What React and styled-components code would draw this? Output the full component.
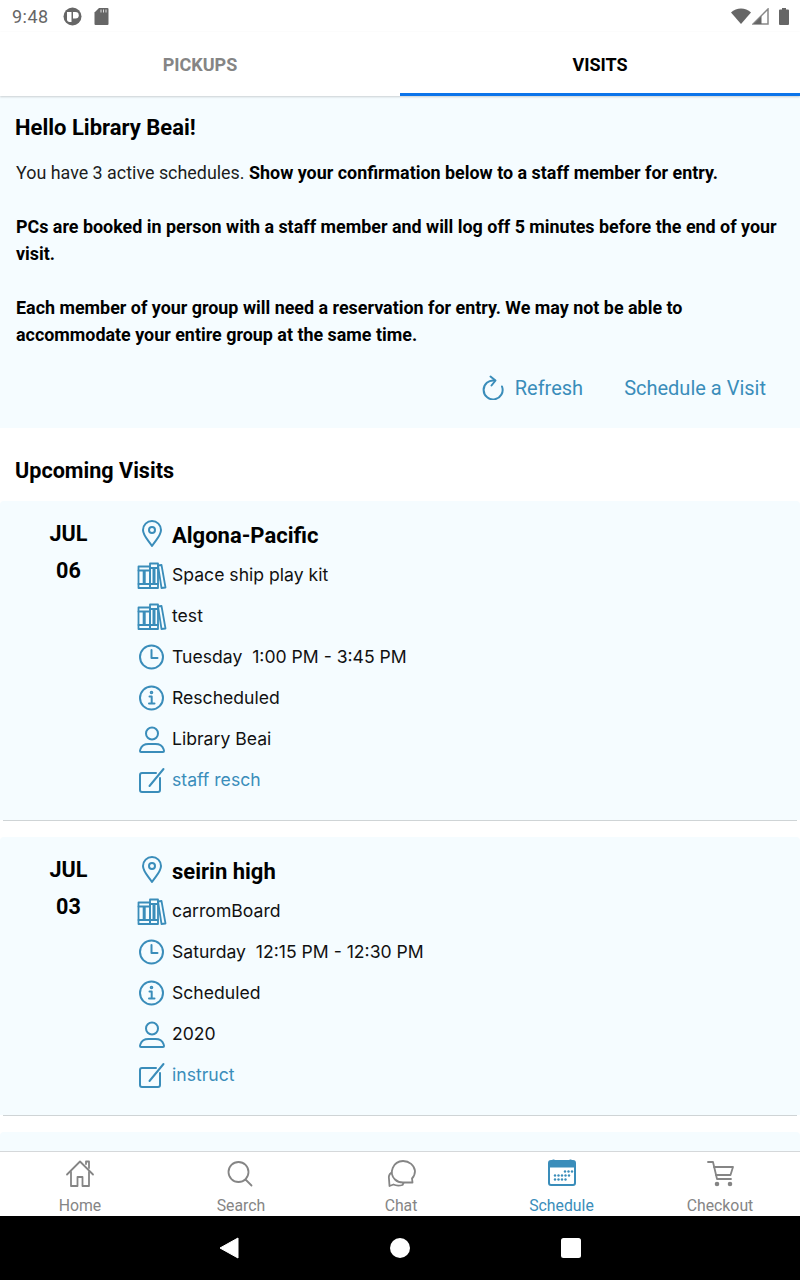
import React from "react";
import styled, { createGlobalStyle } from "styled-components";

const Global = createGlobalStyle`
  html, body { margin: 0; padding: 0; background: white; }
  body { font-family: Roboto, "Liberation Sans", sans-serif; }
`;

const BLUE = "#3a8dba";
const GREY = "#858585";
const PANEL = "#f5fcff";

const Screen = styled.div`
  width: 800px;
  height: 1280px;
  display: flex;
  flex-direction: column;
  overflow: hidden;
`;
const StatusBar = styled.div`
  height: 32px;
  flex: none;
  display: flex;
  align-items: center;
  padding: 0 11px 0 12px;
  color: #666;
  font-size: 18px;
`;
const StatusTime = styled.span`
  margin-right: 14px;
  letter-spacing: 0.5px;
`;
const StatusRight = styled.div`
  margin-left: auto;
  display: flex;
  align-items: center;
  gap: 1px;
`;
const Tabs = styled.div`
  height: 64px;
  flex: none;
  display: flex;
  box-shadow: 0 1px 2px rgba(0, 0, 0, 0.18);
  position: relative;
  z-index: 1;
`;
const Tab = styled.div`
  flex: 1;
  display: flex;
  align-items: center;
  justify-content: center;
  padding-top: 3px;
  font-size: 18px;
  font-weight: 700;
  color: ${p => (p.$active ? "#000" : GREY)};
  border-bottom: 3px solid ${p => (p.$active ? "#0b74ea" : "transparent")};
`;
const Scroll = styled.div`
  flex: 1;
  min-height: 0;
  overflow: hidden;
`;
const Banner = styled.div`
  background: ${PANEL};
  height: 332px;
  box-sizing: border-box;
  padding: 19px 16px 0 16px;
  color: #000;
`;
const Hello = styled.div`
  font-size: 22px;
  font-weight: 700;
  line-height: 26px;
  margin-left: -1px;
  margin-bottom: 18px;
`;
const Para = styled.p`
  margin: 0 0 27px;
  font-size: 17.9px;
  color: #1c1c1c;
  line-height: 27px;
  b { font-weight: 700; color: #000; }
`;
const Actions = styled.div`
  display: flex;
  justify-content: flex-end;
  align-items: center;
  gap: 41px;
  padding-right: 18px;
  color: ${BLUE};
  font-size: 20px;
`;
const Action = styled.div`
  display: flex;
  align-items: center;
  gap: 9px;
`;
const SectionTitle = styled.div`
  height: 73px;
  box-sizing: border-box;
  padding: 30px 15px 0;
  font-size: 21.600px;
  line-height: 26px;
  font-weight: 700;
  color: #000;
`;
const Visit = styled.div`
  background: ${PANEL};
  display: flex;
  padding: 14px 0 20px;
  border-radius: 4px 4px 0 0;
`;
const DateCol = styled.div`
  width: 137px;
  flex: none;
  text-align: center;
  font-size: 21.600px;
  font-weight: 700;
  line-height: 37px;
  color: #000;
`;
const Rows = styled.div`
  display: flex;
  flex-direction: column;
`;
const Row = styled.div`
  height: 41px;
  display: flex;
  align-items: center;
  font-family: Inter, Roboto, sans-serif;
  font-size: 17.600px;
  color: ${p => (p.$link ? BLUE : "#111")};
`;
const TitleRow = styled(Row)`
  height: 40px;
  font-family: Roboto, sans-serif;
  font-size: 22px;
  font-weight: 700;
  color: #000;
  margin-bottom: -1px;
`;
const IconSlot = styled.div`
  width: 30px;
  height: 30px;
  margin-right: 5px;
  display: flex;
  align-items: center;
  justify-content: center;
  flex: none;
`;
const Divider = styled.div`
  height: 1px;
  margin: 0 3px 16px;
  background: #cfd4d6;
`;
const BottomNav = styled.div`
  height: 64px;
  flex: none;
  display: flex;
  background: white;
  border-top: 1px solid #d5d8da;
`;
const NavItem = styled.div`
  width: ${p => p.$w}px;
  flex: none;
  display: flex;
  flex-direction: column;
  align-items: center;
  color: ${p => (p.$active ? BLUE : GREY)};
  font-size: 15.800px;
  line-height: 20px;
  padding-top: 7px;
  box-sizing: border-box;
`;
const NavIcon = styled.div`
  height: 30px;
  margin-bottom: 7px;
`;
const SystemBar = styled.div`
  height: 64px;
  flex: none;
  background: #000;
  display: flex;
  align-items: center;
  justify-content: center;
`;
const SysSlot = styled.div`
  width: 171px;
  display: flex;
  justify-content: center;
`;

const Svg = ({ w = 30, h = 30, color = BLUE, sw = 2, children }) => (
  <svg
    width={w}
    height={h}
    viewBox={`0 0 ${w} ${h}`}
    fill="none"
    stroke={color}
    strokeWidth={sw}
    strokeLinecap="round"
    strokeLinejoin="round"
  >
    {children}
  </svg>
);

const PinIcon = () => (
  <Svg>
    <path d="M15 26C11 20 6 15.500 6 10a9 9 0 0 1 18 0C24 15.500 19 20 15 26Z" />
    <circle cx="15" cy="10" r="3" />
  </Svg>
);
const BooksIcon = () => (
  <Svg sw={1.8}>
    <path d="M1.500 6.500H13V28H1.500Z" />
    <path d="M1.500 10.500H13M1.500 24H13" />
    <path d="M13 3.500h8V28h-8Z" />
    <path d="M13 8H21M13 24H21" />
    <path d="M7.200 11V23.500M17 8.500V23.500" strokeWidth="3" strokeLinecap="butt" />
    <path d="M21 5.500 24.500 5 28.500 27.500 24.500 28Z" />
  </Svg>
);
const ClockIcon = () => (
  <Svg>
    <circle cx="14.500" cy="15" r="11.500" />
    <path d="M14.500 8v8h6" />
  </Svg>
);
const InfoIcon = () => (
  <Svg>
    <circle cx="14.500" cy="15" r="11.500" />
    <path d="M12.500 13.500h2.200V20.500M12 20.500h5.500" />
    <circle cx="14.500" cy="9.500" r="0.800" />
  </Svg>
);
const PersonIcon = () => (
  <Svg>
    <circle cx="15" cy="9.500" r="6" />
    <path d="M4 28c-1.500 0-1-1.500-.5-3 1-3 4-5 8-5h7c4 0 7 2 8 5 .5 1.500 1 3-.5 3Z" />
  </Svg>
);
const NoteIcon = () => (
  <Svg>
    <path d="M19 8H5a2 2 0 0 0-2 2v15a2 2 0 0 0 2 2h16a2 2 0 0 0 2-2V13" />
    <path d="M12.500 21 26.500 4" />
  </Svg>
);
const RefreshIcon = () => (
  <Svg w={24} h={25}>
    <path d="M12.500 5.500A9.500 9.500 0 1 0 20 11.500" />
    <path d="M8.500 1.500 13.500 5.500 9.500 10.500" />
  </Svg>
);

const HomeIcon = () => (
  <Svg color={GREY} sw={1.800}>
    <path d="M2 15.500 15 2.500 28 15.500" />
    <path d="M6 13v14h6.500v-9h5v9H24V13" />
    <path d="M21 5V2.500h3V9" />
  </Svg>
);
const SearchIcon = () => (
  <Svg color={GREY} sw={1.800}>
    <circle cx="12.500" cy="13" r="10" />
    <path d="M19.500 20.500 25.500 26.500" />
  </Svg>
);
const ChatIcon = () => (
  <Svg color={GREY} sw={1.800}>
    <path d="M17 2A11.500 11 0 0 0 9 20.500c2 2 5 3 8 3h9.500L26 19.500c2-2 3-5 3-7.500A12 11 0 0 0 17 2Z" />
    <path d="M5 14c-2 1.500-2.500 3.500-2 6l.5 7 4-1.500c3 1.500 5 1.500 9 .5l1-2" />
  </Svg>
);
const CalendarIcon = () => (
  <svg width="28" height="27" viewBox="0 0 28 27">
    <rect x="1" y="2" width="26" height="24" rx="2" fill="none" stroke={BLUE} strokeWidth="2" />
    <rect x="1" y="2" width="26" height="6.500" fill={BLUE} />
    <path d="M5.500 0.500v2M22.500 0.500v2" stroke={BLUE} strokeWidth="2" />
    {[
      [17, 12.500], [20.500, 12.500], [24, 12.500],
      [7, 16.500], [10.500, 16.500], [14, 16.500], [17.500, 16.500], [21, 16.500],
      [7, 20.500], [10.500, 20.500], [14, 20.500], [17.500, 20.500]
    ].map(([x, y]) => (
      <circle key={x + "-" + y} cx={x} cy={y} r="1.200" fill={BLUE} />
    ))}
  </svg>
);
const CartIcon = () => (
  <Svg color={GREY} sw={1.800}>
    <path d="M3 3h5l4 17h14" />
    <path d="M9 8H28l-2.500 8H11" />
    <circle cx="12" cy="25" r="1.400" fill={GREY} />
    <circle cx="25" cy="25" r="1.400" fill={GREY} />
  </Svg>
);

const VisitCard = ({ month, day, place, items, time, status, person, note }) => (
  <>
    <Visit>
      <DateCol>
        <div>{month}</div>
        <div>{day}</div>
      </DateCol>
      <Rows>
        <TitleRow>
          <IconSlot><PinIcon /></IconSlot>
          {place}
        </TitleRow>
        {items.map(item => (
          <Row key={item}>
            <IconSlot><BooksIcon /></IconSlot>
            {item}
          </Row>
        ))}
        <Row>
          <IconSlot><ClockIcon /></IconSlot>
          {time}
        </Row>
        <Row>
          <IconSlot><InfoIcon /></IconSlot>
          {status}
        </Row>
        <Row>
          <IconSlot><PersonIcon /></IconSlot>
          {person}
        </Row>
        <Row $link>
          <IconSlot><NoteIcon /></IconSlot>
          {note}
        </Row>
      </Rows>
    </Visit>
    <Divider />
  </>
);

export default function App() {
  return (
    <Screen>
      <Global />
      <StatusBar>
        <StatusTime>9:48</StatusTime>
        <svg width="19" height="19" viewBox="0 0 19 19" style={{ marginRight: 12 }}>
          <circle cx="9.500" cy="9.500" r="9" fill="#666" />
          <path d="M4 5h4.500v10H6.500C5 15 4 14 4 12.500Z" fill="white" />
          <path d="M10 5h2.500a3 3 0 0 1 0 6.500H10Z" fill="white" />
        </svg>
        <svg width="15" height="17" viewBox="0 0 15 17">
          <path d="M5 0h8.500a1 1 0 0 1 1 1v15a1 1 0 0 1-1 1H1.500a1 1 0 0 1-1-1V4.500Z" fill="#666" />
          <path d="M7 1.500v3M9.500 1.500v3M12 1.500v3" stroke="#ddd" strokeWidth="1" />
        </svg>
        <StatusRight>
          <svg width="20" height="16" viewBox="0 0 20 16">
            <path d="M0 4.500C5.500-1 14.500-1 20 4.500L10 16Z" fill="#666" />
          </svg>
          <svg width="17" height="17" viewBox="0 0 17 17">
            <path d="M16 1v15H1Z" fill="none" stroke="#888" strokeWidth="1.500" />
            <path d="M9.500 8v8H1.500Z" fill="#666" />
          </svg>
          <svg width="10" height="17" viewBox="0 0 10 17" style={{ marginLeft: 9 }}>
            <path d="M3 0h4v1.500h2a1 1 0 0 1 1 1V16a1 1 0 0 1-1 1H1a1 1 0 0 1-1-1V2.500a1 1 0 0 1 1-1h2Z" fill="#666" />
          </svg>
        </StatusRight>
      </StatusBar>
      <Tabs>
        <Tab>PICKUPS</Tab>
        <Tab $active>VISITS</Tab>
      </Tabs>
      <Scroll>
        <Banner>
          <Hello>Hello Library Beai!</Hello>
          <Para>
            You have 3 active schedules. <b>Show your confirmation below to a staff member for entry.</b>
          </Para>
          <Para>
            <b>PCs are booked in person with a staff member and will log off 5 minutes before the end of your visit.</b>
          </Para>
          <Para>
            <b>Each member of your group will need a reservation for entry. We may not be able to accommodate your entire group at the same time.</b>
          </Para>
          <Actions>
            <Action><RefreshIcon />Refresh</Action>
            <Action>Schedule a Visit</Action>
          </Actions>
        </Banner>
        <SectionTitle>Upcoming Visits</SectionTitle>
        <VisitCard
          month="JUL"
          day="06"
          place="Algona-Pacific"
          items={["Space ship play kit", "test"]}
          time={"Tuesday\u00a0\u00a01:00 PM - 3:45 PM"}
          status="Rescheduled"
          person="Library Beai"
          note="staff resch"
        />
        <VisitCard
          month="JUL"
          day="03"
          place="seirin high"
          items={["carromBoard"]}
          time={"Saturday\u00a0\u00a012:15 PM - 12:30 PM"}
          status="Scheduled"
          person="2020"
          note="instruct"
        />
        <Visit />
      </Scroll>
      <BottomNav>
        <NavItem $w={160}><NavIcon><HomeIcon /></NavIcon>Home</NavItem>
        <NavItem $w={162}><NavIcon><SearchIcon /></NavIcon>Search</NavItem>
        <NavItem $w={158}><NavIcon><ChatIcon /></NavIcon>Chat</NavItem>
        <NavItem $w={163} $active><NavIcon><CalendarIcon /></NavIcon>Schedule</NavItem>
        <NavItem $w={154}><NavIcon><CartIcon /></NavIcon>Checkout</NavItem>
      </BottomNav>
      <SystemBar>
        <SysSlot>
          <svg width="20" height="22" viewBox="0 0 20 22">
            <path d="M19 1v20L1 11Z" fill="white" stroke="white" strokeLinejoin="round" />
          </svg>
        </SysSlot>
        <SysSlot>
          <svg width="20" height="20" viewBox="0 0 20 20"><circle cx="10" cy="10" r="10" fill="white" /></svg>
        </SysSlot>
        <SysSlot>
          <svg width="20" height="20" viewBox="0 0 20 20"><rect width="20" height="20" rx="2.500" fill="white" /></svg>
        </SysSlot>
      </SystemBar>
    </Screen>
  );
}
